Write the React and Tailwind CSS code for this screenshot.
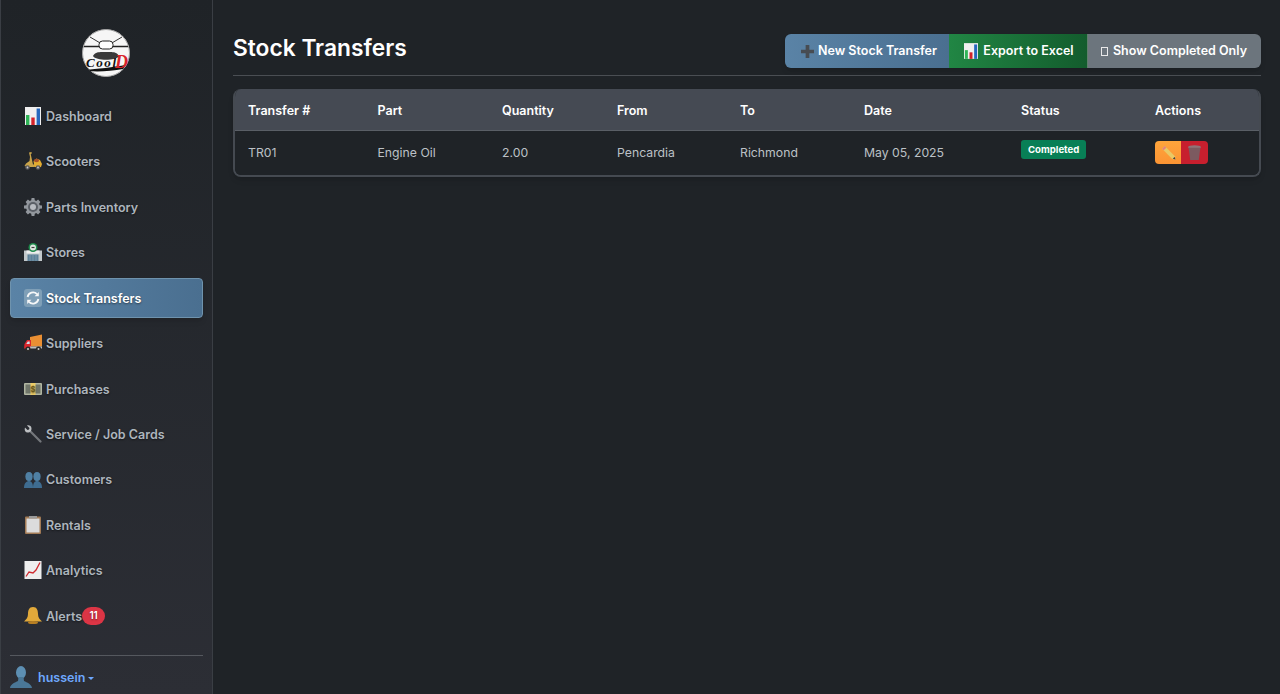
const ChartIcon = ({ w = 16, h = 18 }) => (
  <svg width={w} height={h} viewBox="0 0 16 18">
    <rect x="0" y="0" width="16" height="18" fill="#f0f0f0" />
    <rect x="1" y="8" width="3.4" height="10" fill="#2fb457" />
    <rect x="6.3" y="10.5" width="3.4" height="7.5" fill="#d3222a" />
    <rect x="11.6" y="1.5" width="3.4" height="16.5" fill="#2668bd" />
  </svg>
);

const ScooterIcon = () => (
  <svg width="18" height="18" viewBox="0 0 18 18">
    <path d="M5 0.5 L7.5 0 L7.8 1.5 L6.7 2 L8 8 L9 12.5 L12 12 L10.5 15 L3.5 15 L0.5 14 L2 11.5 L5.5 9 L6 5 Z" fill="#c9a44a" />
    <path d="M9.5 9 L12.5 6.5 L16 8 L18 12 L17 15 L10.5 15 Z" fill="#e2ac30" />
    <ellipse cx="12.5" cy="8.5" rx="2.6" ry="1.7" fill="#a5502a" />
    <circle cx="3.5" cy="15.5" r="2.3" fill="#57575a" />
    <circle cx="14" cy="15.5" r="2.3" fill="#57575a" />
    <circle cx="3.5" cy="15.5" r="0.9" fill="#c9c9c9" />
    <circle cx="14" cy="15.5" r="0.9" fill="#c9c9c9" />
  </svg>
);

const GearIcon = () => (
  <svg width="18" height="18" viewBox="0 0 18 18">
    <path
      d="M7.6 0h2.8l.4 2.3 1.4.6 1.9-1.3 2.3 2.3-1.3 1.9.6 1.4 2.3.4v2.8l-2.3.4-.6 1.4 1.3 1.9-2.3 2.3-1.9-1.3-1.4.6-.4 2.3H7.6l-.4-2.3-1.4-.6-1.9 1.3-2.3-2.3 1.3-1.9-.6-1.4L0 10.4V7.6l2.3-.4.6-1.4-1.3-1.9 2.3-2.3 1.9 1.3 1.4-.6z"
      fill="#92979d"
    />
    <circle cx="9" cy="9" r="5" fill="#5a5f66" />
    <circle cx="9" cy="9" r="3" fill="#b8bcc1" />
  </svg>
);

const StoreIcon = () => (
  <svg width="18" height="18" viewBox="0 0 18 18">
    <rect x="0" y="7.5" width="18" height="10.5" fill="#c2c8cb" />
    <rect x="3.5" y="11.5" width="11" height="6.5" fill="#5d8199" />
    <path d="M6 11.5 V18 M9 11.5 V18 M12 11.5 V18" stroke="#8aa3b4" strokeWidth="0.7" />
    <rect x="2.5" y="7.5" width="13" height="3" fill="#eceeee" />
    <circle cx="9" cy="4.5" r="4.5" fill="#1f8a4c" />
    <circle cx="9" cy="4.5" r="3" fill="#dde6df" />
    <path d="M7.5 4.5 H10.5" stroke="#3c3c3c" strokeWidth="1.2" />
  </svg>
);

const RefreshIcon = () => (
  <svg width="18" height="18" viewBox="0 0 18 18">
    <rect x="0" y="0" width="18" height="18" rx="3" fill="#7f9fb7" />
    <path d="M3.6 8 A5.5 5.5 0 0 1 13 5.2" fill="none" stroke="#f6f7f8" strokeWidth="1.8" />
    <path d="M14.4 10 A5.5 5.5 0 0 1 5 12.8" fill="none" stroke="#f6f7f8" strokeWidth="1.8" />
    <path d="M14.8 3 V7.2 H10.6 Z" fill="#f6f7f8" />
    <path d="M3.2 15 V10.8 H7.4 Z" fill="#f6f7f8" />
  </svg>
);

const TruckIcon = () => (
  <svg width="18" height="18" viewBox="0 0 18 18">
    <path d="M6 3 L18 0.5 V12.5 H6 Z" fill="#ea8f33" />
    <path d="M0 14.5 L0.5 10 L3 6 H7 V14.5 Z" fill="#dc262c" />
    <path d="M2.3 10 L3.8 7.5 H5.7 V10 Z" fill="#cfe0ea" />
    <rect x="6" y="12.5" width="12" height="2" fill="#bdbdbd" />
    <circle cx="4" cy="15" r="2.6" fill="#2b2b2b" />
    <circle cx="14.5" cy="15" r="2.6" fill="#2b2b2b" />
    <circle cx="4" cy="15" r="1" fill="#cccccc" />
    <circle cx="14.5" cy="15" r="1" fill="#cccccc" />
  </svg>
);

const MoneyIcon = () => (
  <svg width="18" height="18" viewBox="0 0 18 18">
    <rect x="0" y="3" width="18" height="12" rx="1" fill="#b1b6a2" />
    <rect x="1.5" y="4.5" width="15" height="9" fill="#70766a" />
    <rect x="6.5" y="3" width="5" height="12" fill="#eccd68" />
    <text x="9" y="12" textAnchor="middle" fontSize="7.5" fontWeight="700" fontFamily="Inter, sans-serif" fill="#6a5a20">$</text>
  </svg>
);

const WrenchIcon = () => (
  <svg width="18" height="18" viewBox="0 0 18 18">
    <path d="M6.5 6.5 L16.5 16.5" stroke="#74777b" strokeWidth="2.2" strokeLinecap="round" />
    <path d="M1 2.5 L3.5 5 L5 4.5 L5.5 3 L3 0.5 C5 -0.2 7.5 1 7.5 3.5 C7.5 5 7 6 6.5 6.5 C6 7 5 7.5 3.5 7.5 C1 7.5 0.2 5 1 2.5 Z" fill="#bcbfc2" />
  </svg>
);

const PeopleIcon = () => (
  <svg width="18" height="18" viewBox="0 0 18 18">
    <ellipse cx="5" cy="5.5" rx="3.6" ry="4.5" fill="#4f80a4" />
    <ellipse cx="13" cy="5.5" rx="3.6" ry="4.5" fill="#4f80a4" />
    <path d="M0 17 C0 12 2.5 10 5 10 C7.5 10 9 12 9 17 Z" fill="#3e6c90" />
    <path d="M9 17 C9 12 10.5 10 13 10 C15.5 10 18 12 18 17 Z" fill="#3e6c90" />
  </svg>
);

const ClipboardIcon = () => (
  <svg width="18" height="18" viewBox="0 0 18 18">
    <rect x="1" y="0.5" width="16" height="17.5" rx="1" fill="#a27a55" />
    <rect x="2.5" y="2.5" width="13" height="14" fill="#dcdcdc" />
    <rect x="5" y="0" width="8" height="2.5" fill="#9a9a9a" />
  </svg>
);

const TrendIcon = () => (
  <svg width="18" height="18" viewBox="0 0 18 18">
    <rect x="0.5" y="0" width="17" height="18" fill="#eeeeee" />
    <path d="M2 15.5 L5 11 L9 12 L12 9 L16 1.5" fill="none" stroke="#cf2a2f" strokeWidth="1.3" />
  </svg>
);

const BellIcon = () => (
  <svg width="18" height="18" viewBox="0 0 18 18">
    <path d="M9 0 C13 0 14 3.5 14 7 C14 10.5 15.5 12 18 14.5 H0 C2.5 12 4 10.5 4 7 C4 3.5 5 0 9 0 Z" fill="#e2a93a" />
    <ellipse cx="9" cy="15.5" rx="5" ry="1.6" fill="#b87f23" />
  </svg>
);

const UserIcon = () => (
  <svg width="22" height="22" viewBox="0 0 22 22">
    <ellipse cx="11" cy="6.5" rx="5" ry="6.5" fill="#5d8fb3" />
    <path d="M0 22 C0.5 18 5 16.5 8 15 L8.5 11 H13.5 L14 15 C17 16.5 21.5 18 22 22 Z" fill="#4a7797" />
  </svg>
);

const PlusIcon = () => (
  <svg width="13" height="13" viewBox="0 0 14 14">
    <path d="M5 0 H9 V5 H14 V9 H9 V14 H5 V9 H0 V5 H5 Z" fill="#474c52" />
  </svg>
);

const PencilIcon = () => (
  <svg width="15" height="15" viewBox="0 0 14 14">
    <path d="M3.5 1 L13 10.5 L13.5 13.5 L10.5 13 L1 3.5 Z" fill="#e9c966" />
    <path d="M1 3.5 L3.5 1 L5 2.5 L2.5 5 Z" fill="#e4847c" />
    <path d="M11 12.8 L12.8 11 L13.5 13.5 Z" fill="#444444" />
  </svg>
);

const TrashIcon = () => (
  <svg width="15" height="15" viewBox="0 0 14 14">
    <ellipse cx="7" cy="2" rx="6" ry="1.7" fill="#8f7478" />
    <path d="M1.5 2.5 H12.5 L11 14 H3 Z" fill="#7c5a60" />
  </svg>
);

const navItems = [
  { label: "Dashboard", icon: <ChartIcon /> },
  { label: "Scooters", icon: <ScooterIcon /> },
  { label: "Parts Inventory", icon: <GearIcon /> },
  { label: "Stores", icon: <StoreIcon /> },
  { label: "Stock Transfers", icon: <RefreshIcon />, active: true },
  { label: "Suppliers", icon: <TruckIcon /> },
  { label: "Purchases", icon: <MoneyIcon /> },
  { label: "Service / Job Cards", icon: <WrenchIcon /> },
  { label: "Customers", icon: <PeopleIcon /> },
  { label: "Rentals", icon: <ClipboardIcon /> },
  { label: "Analytics", icon: <TrendIcon /> },
  { label: "Alerts", icon: <BellIcon />, badge: 11 },
];

const columns = [
  { label: "Transfer #", width: "w-[129.5px]", value: "TR01" },
  { label: "Part", width: "w-[124.5px]", value: "Engine Oil" },
  { label: "Quantity", width: "w-[115px]", value: "2.00" },
  { label: "From", width: "w-[123px]", value: "Pencardia" },
  { label: "To", width: "w-[124px]", value: "Richmond" },
  { label: "Date", width: "w-[157px]", value: "May 05, 2025" },
];

function Logo() {
  return (
    <svg width="48" height="48" viewBox="0 0 48 48" className="rounded-full">
      <circle cx="24" cy="24" r="24" fill="#f6f6f6" />
      <circle cx="24" cy="24" r="23.5" fill="none" stroke="#999" />
      <path d="M2 17.5 H46" stroke="#222" strokeWidth="1.6" />
      <path d="M8 8 L19 14.5 M40 8 L29 14.5" stroke="#333" strokeWidth="1" />
      <rect x="17" y="12" width="14" height="8" rx="3.5" fill="#fff" stroke="#222" />
      <path d="M11 27 C13 22 20 23 24 23 C28 23 35 22 37 27 C34 32 14 32 11 27 Z" fill="#3a3a3a" />
      <path d="M4 41 C14 40 32 38 44 36 L41 40 C30 42 16 43 7 42 Z" fill="#111" />
      <text x="4" y="38" fontSize="13" fontWeight="700" fontStyle="italic" fontFamily="'Liberation Serif', serif" fill="#111" textLength="30">Cool</text>
      <text x="33" y="39" fontSize="18" fontWeight="700" fontStyle="italic" fontFamily="'Liberation Serif', serif" fill="#d8232a">D</text>
    </svg>
  );
}

export default function App() {
  return (
    <div className="flex h-[694px] overflow-hidden bg-[#1f2327] font-['Inter',sans-serif]">
      {/* Sidebar */}
      <aside className="flex w-[213px] shrink-0 flex-col border-r border-l border-[#3a3e44] bg-gradient-to-b from-[#1f2327] to-[#2c2e35] px-[9px]">
        <div className="flex justify-center pt-[29px] pb-[19px] pr-[1px]">
          <Logo />
        </div>
        <nav className="flex flex-col gap-[5.45px]">
          {navItems.map((item) => (
            <div
              key={item.label}
              className={`flex h-[40px] items-center gap-[4px] rounded border pl-[13px] text-[12.5px] font-semibold [text-shadow:0_1px_2px_rgba(0,0,0,0.5)] ${
                item.active
                  ? "border-[#6f93ad] bg-gradient-to-r from-[#5a83a6] to-[#4a6f90] text-white shadow-md"
                  : "border-transparent text-[#adb5bd]"
              }`}
            >
              <span className="flex w-[18px] justify-center">{item.icon}</span>
              <span className="pt-[2.5px]">{item.label}</span>
              {item.badge && (
                <span className="-ml-[4px] flex h-[18px] w-[23px] items-center justify-center rounded-full bg-[#dc3545] text-[10px] font-semibold text-white">
                  {item.badge}
                </span>
              )}
            </div>
          ))}
        </nav>
        <div className="mt-auto border-t border-[#55585e] pt-[10px] pb-[6px]">
          <div className="flex items-center gap-[6px]">
            <UserIcon />
            <span className="pt-[2px] text-[12.5px] font-semibold text-[#6ea8fe]">hussein</span>
            <span className="-ml-[3px] mt-[3px] border-x-[3px] border-t-[3px] border-x-transparent border-t-[#6ea8fe]" />
          </div>
        </div>
      </aside>

      {/* Main */}
      <main className="min-w-0 flex-1 pt-[34px] pr-[19px] pl-[20px]">
        <div className="flex items-center justify-between border-b border-[#4a4e53] pb-[7px]">
          <h1 className="pb-[6px] text-[22.75px] leading-[28px] font-semibold text-white">Stock Transfers</h1>
          <div className="flex h-[34px] overflow-hidden rounded-md text-[12.5px] font-semibold text-white shadow-md [text-shadow:0_1px_2px_rgba(0,0,0,0.5)]">
            <button className="flex w-[164px] items-center justify-center gap-[4px] bg-gradient-to-r from-[#5a83a6] to-[#4a6f90] pl-[4px]">
              <PlusIcon />
              New Stock Transfer
            </button>
            <button className="flex w-[138px] items-center justify-center gap-[5px] bg-gradient-to-r from-[#218644] to-[#135c2d] pl-[2px]">
              <ChartIcon w={14} h={16} />
              Export to Excel
            </button>
            <button className="flex w-[174px] items-center justify-center gap-[5px] border-l border-[#5f7e6c] bg-[#6c757d] pr-[1px]">
              <span className="h-[9px] w-[7px] border border-[#e8e8e8]" />
              Show Completed Only
            </button>
          </div>
        </div>

        <div className="mt-[13px] overflow-hidden rounded-lg border-2 border-t-0 border-[#454a51] shadow-md">
          <table className="w-full table-fixed border-collapse">
            <thead>
              <tr className="h-[41px] border-b border-[#5a5f66] bg-[#454a53] text-left text-[12.5px] font-semibold text-white">
                {columns.map((col) => (
                  <th key={col.label} className={`${col.width} pt-[5px] pl-[13px] font-semibold`}>
                    {col.label}
                  </th>
                ))}
                <th className="w-[134px] pt-[5px] pl-[13px] font-semibold">Status</th>
                <th className="pt-[5px] pl-[13px] font-semibold">Actions</th>
              </tr>
            </thead>
            <tbody>
              <tr className="h-[45px] bg-[#1f2327] text-[12.25px] text-[#bcc1c6]">
                {columns.map((col) => (
                  <td key={col.label} className="pl-[13px]">
                    {col.value}
                  </td>
                ))}
                <td className="pl-[13px] align-top pt-[9px]">
                  <span className="inline-block rounded-[3px] bg-[#087f56] px-[7px] py-[3px] text-[9.6px] leading-[13px] font-bold text-white">
                    Completed
                  </span>
                </td>
                <td className="pl-[13px] align-top pt-[10px]">
                  <div className="flex h-[23px] w-[53px] overflow-hidden rounded-[4px]">
                    <span className="flex w-[26px] items-center justify-center bg-gradient-to-b from-[#ffa53c] to-[#fb9433]">
                      <PencilIcon />
                    </span>
                    <span className="flex flex-1 items-center justify-center bg-[#c71f2e]">
                      <TrashIcon />
                    </span>
                  </div>
                </td>
              </tr>
            </tbody>
          </table>
        </div>
      </main>
    </div>
  );
}
